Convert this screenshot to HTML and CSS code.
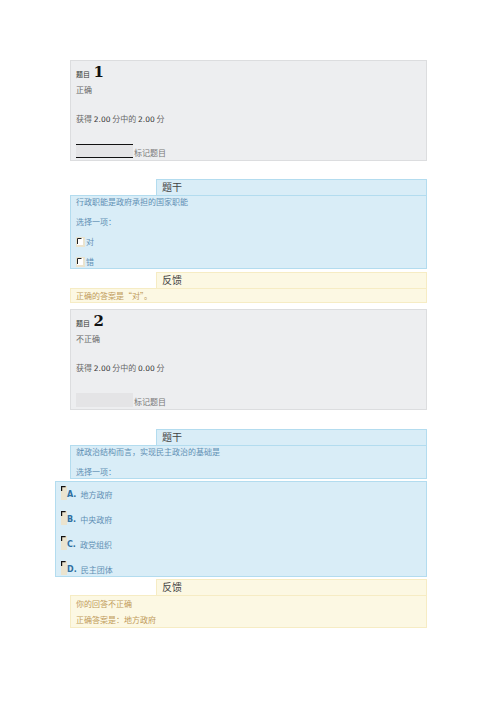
FILE: index.html
```html
<!DOCTYPE html>
<html lang="zh-CN">
<head>
    <meta charset="UTF-8">
    <meta name="viewport" content="width=device-width, initial-scale=1.0">
    <title>测验回顾</title>
    <link rel="stylesheet" href="styles.css">
</head>
<body>
    <div class="page">

        <!-- 题目 1 -->
        <div class="info">
            <div class="qno">题目 <span class="num">1</span></div>
            <div class="state">正确</div>
            <div class="grade">获得 <b>2.00</b> 分中的 <b>2.00</b> 分</div>
            <div class="flag"><span class="flag-box lined"></span><span class="flag-text">标记题目</span></div>
        </div>

        <div class="head head-q">题干</div>
        <div class="qtext">
            <p>行政职能是政府承担的国家职能</p>
            <p>选择一项：</p>
            <p class="opt"><svg class="radio" width="9" height="10" viewBox="0 0 9 10"><rect width="9" height="10" fill="#ebe4cf"/><rect x="1" y="1" width="6" height="7" fill="#fff"/><path d="M1.5 7V1.5h4" stroke="#222" stroke-width="1" fill="none"/></svg>对</p>
            <p class="opt"><svg class="radio" width="9" height="10" viewBox="0 0 9 10"><rect width="9" height="10" fill="#ebe4cf"/><rect x="1" y="1" width="6" height="7" fill="#fff"/><path d="M1.5 7V1.5h4" stroke="#222" stroke-width="1" fill="none"/></svg>错</p>
        </div>

        <div class="head head-fb">反馈</div>
        <div class="fb">
            <p>正确的答案是“对”。</p>
        </div>

        <!-- 题目 2 -->
        <div class="info info-2">
            <div class="qno">题目 <span class="num">2</span></div>
            <div class="state">不正确</div>
            <div class="grade">获得 <b>2.00</b> 分中的 <b>0.00</b> 分</div>
            <div class="flag"><span class="flag-box"></span><span class="flag-text">标记题目</span></div>
        </div>

        <div class="head head-q">题干</div>
        <div class="qtext qtext-2">
            <p>就政治结构而言，实现民主政治的基础是</p>
            <p>选择一项：</p>
        </div>
        <div class="answers">
            <p class="ans"><svg class="mark" width="6" height="14" viewBox="0 0 6 14"><rect width="6" height="14" fill="#ebe4cf"/><path d="M0.6 5V0.6h4" stroke="#111" stroke-width="1.2" fill="none"/></svg><span class="letter">A.</span>地方政府</p>
            <p class="ans"><svg class="mark" width="6" height="14" viewBox="0 0 6 14"><rect width="6" height="14" fill="#ebe4cf"/><path d="M0.6 5V0.6h4" stroke="#111" stroke-width="1.2" fill="none"/></svg><span class="letter">B.</span>中央政府</p>
            <p class="ans"><svg class="mark" width="6" height="14" viewBox="0 0 6 14"><rect width="6" height="14" fill="#ebe4cf"/><path d="M0.6 5V0.6h4" stroke="#111" stroke-width="1.2" fill="none"/></svg><span class="letter">C.</span>政党组织</p>
            <p class="ans"><svg class="mark" width="6" height="14" viewBox="0 0 6 14"><rect width="6" height="14" fill="#ebe4cf"/><path d="M0.6 5V0.6h4" stroke="#111" stroke-width="1.2" fill="none"/></svg><span class="letter">D.</span>民主团体</p>
        </div>

        <div class="head head-fb">反馈</div>
        <div class="fb fb-2">
            <p>你的回答不正确</p>
            <p>正确答案是：地方政府</p>
        </div>

    </div>
</body>
</html>
```

FILE: styles.css
```css
body {
    margin: 0;
    background: #fff;
    font-family: "Noto Sans CJK SC", "DejaVu Sans", sans-serif;
    font-size: 8px;
}

p {
    margin: 0;
}

.page {
    width: 357px;
    margin-left: 70px;
    padding-top: 60px;
}

/* grey info box */
.info {
    box-sizing: border-box;
    height: 101px;
    padding: 3px 5px 0;
    background: #edeef0;
    border: 1px solid #dcdddf;
    color: #666;
}

.info-2 {
    margin-top: 6px;
}

.qno {
    height: 16px;
    line-height: 16px;
    font-size: 7px;
    color: #333;
}

.qno .num {
    margin-left: 2px;
    font-family: "DejaVu Serif", serif;
    font-weight: bold;
    font-size: 15px;
    color: #111;
}

.state {
    margin-top: 4px;
    line-height: 12px;
}

.grade {
    margin-top: 17px;
    line-height: 12px;
}

.grade b {
    font-family: "DejaVu Sans", sans-serif;
    font-weight: normal;
    font-size: 7.5px;
    color: #333;
}

.flag {
    display: flex;
    align-items: flex-end;
    margin-top: 18px;
}

.flag-box {
    box-sizing: border-box;
    width: 57px;
    height: 14px;
    background: #e4e4e6;
}

.flag-box.lined {
    border-top: 1px solid #111;
    border-bottom: 1px solid #111;
}

.flag-text {
    margin-left: 1px;
    line-height: 10px;
    color: #777;
}

/* section headers */
.head {
    box-sizing: border-box;
    height: 16px;
    margin-left: 86px;
    padding-left: 5px;
    line-height: 14px;
    font-size: 10px;
    color: #444;
}

.head-q {
    margin-top: 18px;
    background: #d9edf7;
    border: 1px solid #b3dcef;
    border-bottom: none;
}

.info-2 + .head-q {
    margin-top: 19px;
}

.head-fb {
    margin-top: 3px;
    background: #fcf8e3;
    border: 1px solid #f6ecc4;
    border-bottom: none;
}

/* question text */
.qtext {
    box-sizing: border-box;
    height: 74px;
    padding: 0 5px;
    background: #d9edf7;
    border: 1px solid #b3dcef;
    color: #5f8fb4;
}

.qtext p {
    line-height: 12px;
    margin-bottom: 8px;
}

.qtext .opt {
    display: flex;
    align-items: center;
}

.radio {
    margin-right: 1px;
}

.qtext-2 {
    height: 34px;
}

.answers {
    box-sizing: border-box;
    height: 96px;
    margin: 2px 0 0 -15px;
    padding: 3px 5px 0;
    background: #d9edf7;
    border: 1px solid #b3dcef;
    color: #5f8fb4;
}

.ans {
    display: flex;
    align-items: flex-start;
    height: 25px;
    line-height: 20px;
}

.mark {
    margin-top: 1px;
}

.letter {
    margin-right: 4px;
    font-family: "DejaVu Sans", sans-serif;
    font-size: 8px;
    font-weight: bold;
    color: #2f6f9f;
}

.answers + .head-fb {
    margin-top: 2px;
}

/* feedback */
.fb {
    box-sizing: border-box;
    height: 15px;
    padding: 0 5px;
    background: #fcf8e3;
    border: 1px solid #f6ecc4;
    color: #bf9a5a;
    line-height: 13px;
}

.fb-2 {
    height: 33px;
    line-height: 16px;
}
```
